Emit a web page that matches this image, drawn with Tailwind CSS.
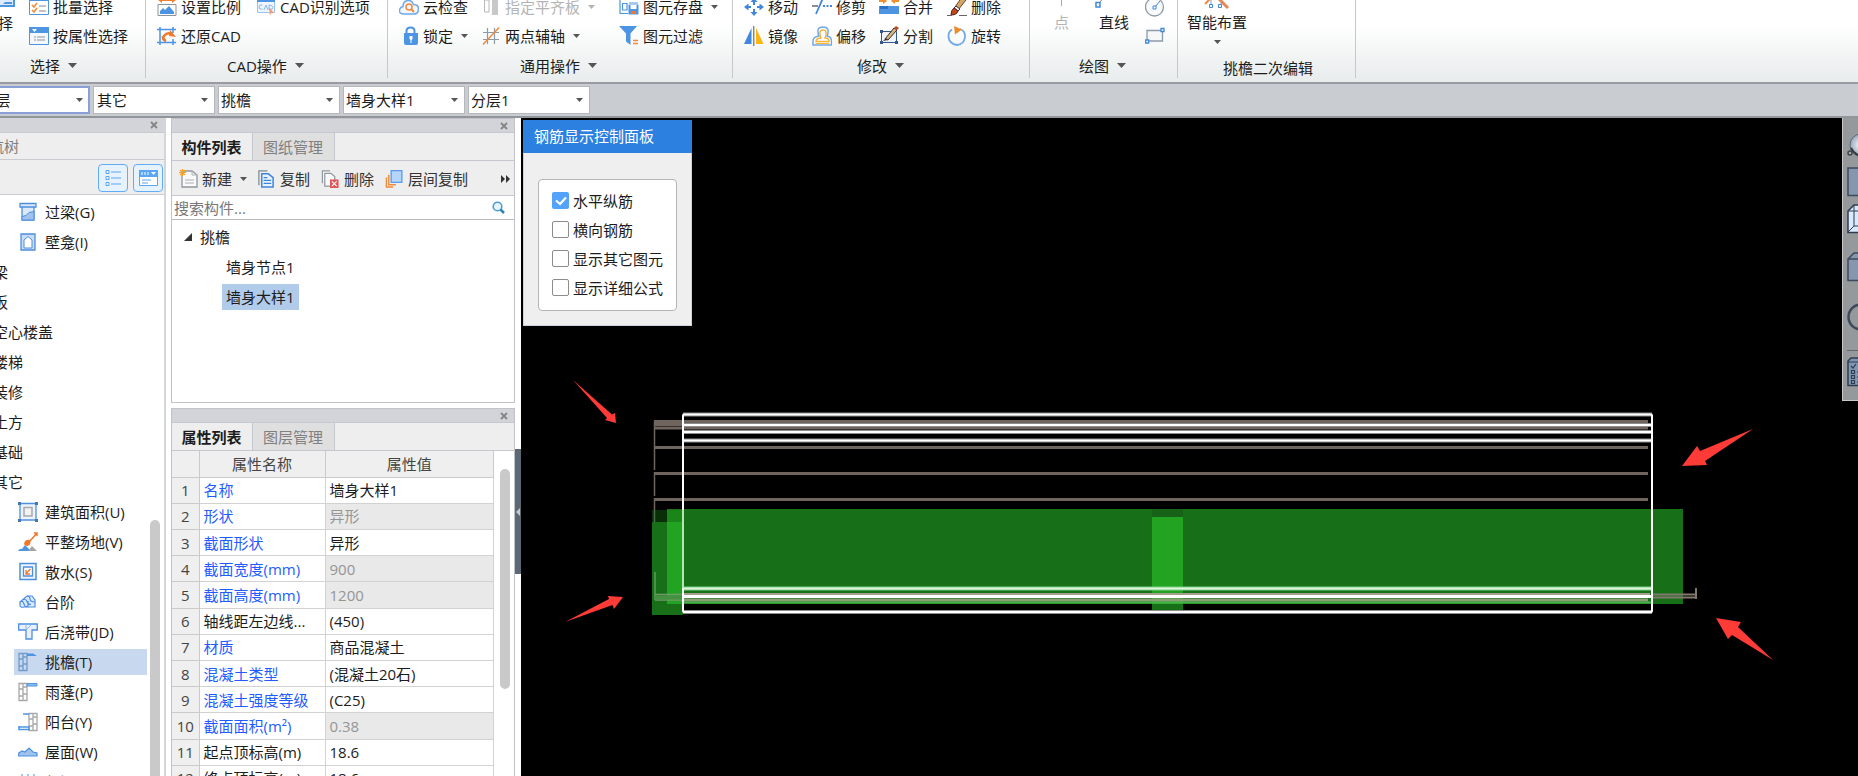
<!DOCTYPE html>
<html lang="zh-CN">
<head>
<meta charset="utf-8">
<title>构件编辑</title>
<script src="https://cdn.jsdelivr.net/npm/@tailwindcss/browser@4"></script>
</head>
<body class="flex h-screen flex-col overflow-hidden bg-white font-['Open_Sans','Noto_Sans_CJK_SC',sans-serif] text-[15px] leading-5 text-[#1c1c1c]">

<!-- Ribbon -->
<header class="flex h-[84px] shrink-0 overflow-hidden whitespace-nowrap border-b-2 border-[#989ba1] bg-linear-to-b from-white from-30% to-[#e8ecec]">
  <section class="w-[146px] shrink-0 border-r border-[#c6c9cb] h-[78px]">
    <div class="-mt-2 flex flex-col">
      <div class="flex">
        <button class="-ml-[17px] flex h-[58px] w-[46px] shrink-0 flex-col items-start pt-px">
          <svg class="ml-4 h-5 w-4" viewBox="0 0 16 20"><path d="M0 6H15V13H0z" fill="#dceafa" stroke="#4d94e2" stroke-width="2"/><path d="M6 9H13V11H4z" fill="#4d94e2"/></svg>
          <span>选择</span>
        </button>
        <div class="flex flex-col">
          <button class="flex h-[29px] items-center gap-1"><svg class="size-5" viewBox="0 0 20 20"><path d="M.5 1H19.500V17.500H.500z" fill="#fff" stroke="#4d94e2"/><path d="M0 0H20V4H0z" fill="#4d94e2"/><path d="M3 8l2 2 3-4M3 13l2 2 3-4" fill="none" stroke="#f08a3c" stroke-width="1.500"/><path d="M10 9h7M10 14h7" stroke="#888"/></svg>批量选择</button>
          <button class="flex h-[29px] items-center gap-1"><svg class="size-5" viewBox="0 0 20 20"><path d="M.5 1.500H19.500V18.500H.500z" fill="#f4f8fd" stroke="#4d94e2"/><path d="M0 1H20V7H0z" fill="#4d94e2"/><path d="M3 3h5l-2.500 3z" fill="#fff"/><path d="M5 11h2M5 14h2M8 11h8M8 14h8" stroke="#8d9299"/></svg>按属性选择</button>
        </div>
      </div>
      <button class="flex h-[31px] items-center gap-2 pl-[30px]">选择<svg class="h-[5px] w-[9px]" viewBox="0 0 9 5"><path d="M0 0H9L4.500 5z" fill="#555"/></svg></button>
    </div>
  </section>

  <section class="w-[242px] shrink-0 border-r border-[#c6c9cb] h-[78px]">
    <div class="-mt-2 flex flex-col">
      <div class="flex h-[29px] pl-[11px]">
        <button class="flex w-[99px] items-center gap-1"><svg class="size-5" viewBox="0 0 20 20"><path d="M1 3l4-3v2h10V0l4 3-4 3V4H5v2z" fill="#f08030"/><path d="M1 7.500H19V18.500H1z" fill="#fff" stroke="#8d9299"/><path d="M3 17v-3l3-3 2 2 4-4 5 6v2z" fill="#4d94e2"/></svg>设置比例</button>
        <button class="flex items-center gap-1"><svg class="size-5" viewBox="0 0 20 20"><path d="M1.500 1.500H18.500V15.500H1.500z" fill="#eef5fd" stroke="#9cc3ee"/><path d="M1 0H19V5H1z" fill="#4d94e2"/><path d="M6.500 8Q3 7 3 10t3.500 2M8 13l2-5 2 5M13 8v4.500q4 0 4-2t-4-2.500" fill="none" stroke="#8ab8ea"/><path d="M13 10l5 6-3 0-1 3z" fill="#f09a80"/></svg>CAD识别选项</button>
      </div>
      <button class="ml-[11px] flex h-[29px] items-center gap-1"><svg class="size-5" viewBox="0 0 20 20"><path d="M3 1V19M16 1V7M16 13V19M0 3.500H19M0 16.500H19" stroke="#4d94e2" stroke-width="1.500" fill="none"/><path d="M9 15q-5-2-2-5 3-4 8-2" fill="none" stroke="#f0782c" stroke-width="2.500"/><path d="M13 4l6 7-7-1zM4 10l4 2 1 5z" fill="#f0782c"/></svg>还原CAD</button>
      <button class="flex h-[31px] items-center gap-2 pl-[81px]">CAD操作<svg class="h-[5px] w-[9px]" viewBox="0 0 9 5"><path d="M0 0H9L4.500 5z" fill="#555"/></svg></button>
    </div>
  </section>

  <section class="w-[345px] shrink-0 border-r border-[#c6c9cb] h-[78px]">
    <div class="-mt-2 flex flex-col">
      <div class="grid grid-cols-[82px_138px_auto] justify-start pl-[11px]">
        <button class="flex h-[29px] items-center gap-1"><svg class="size-5" viewBox="0 0 20 20"><path d="M5 17q-5 0-4.500-4Q1 10 4 9.500 4 4 9 3.500q4-.5 5.500 4 5 0 5 4.500 0 5-5 5z" fill="#f3f8fe" stroke="#70a9ea" stroke-width="1.500"/><circle cx="10" cy="10" r="3" fill="none" stroke="#f08a3c" stroke-width="1.500"/><path d="M12 12l3 3" stroke="#f08a3c" stroke-width="2"/></svg>云检查</button>
        <button class="flex h-[29px] items-center gap-1 text-[#b4b4b4]" disabled><svg class="size-5" viewBox="0 0 20 20"><path d="M3.500 3H8V15H3.500z" fill="none" stroke="#b8b8b8"/><path d="M11 1H17V18H11z" fill="#c8c8c8"/></svg>指定平齐板<svg class="ml-1 h-1 w-[7px]" viewBox="0 0 7 4"><path d="M0 0H7L3.500 4z" fill="#b4b4b4"/></svg></button>
        <button class="flex h-[29px] items-center gap-1"><svg class="size-5" viewBox="0 0 20 20"><path d="M1 1.500H18M1 1V16.500H9M3.500 6.500H8V13H3.500zM10 6H19" fill="none" stroke="#4d94e2" stroke-width="1.200"/><path d="M9.500 7.500H19.500V17.500H9.500z" fill="#4d94e2"/><path d="M11.500 8H17.500V12H11.500z" fill="#fff"/><path d="M12 14H17V17H12z" fill="#f0782c"/></svg>图元存盘<svg class="ml-1 h-1 w-[7px]" viewBox="0 0 7 4"><path d="M0 0H7L3.500 4z" fill="#555"/></svg></button>
        <button class="flex h-[29px] items-center gap-1"><svg class="size-5" viewBox="0 0 20 20"><path d="M7.500 9V5q0-3.500 4-3.500t4 3.500v4" fill="none" stroke="#4d94e2" stroke-width="2"/><path d="M5 7H19V17q0 2-2 2H7q-2 0-2-2z" fill="#4d94e2"/><path d="M10.500 10h3v3l-1 1v3h-1v-3l-1-1z" fill="#fff"/></svg>锁定<svg class="ml-1 h-1 w-[7px]" viewBox="0 0 7 4"><path d="M0 0H7L3.500 4z" fill="#555"/></svg></button>
        <button class="flex h-[29px] items-center gap-1"><svg class="size-5" viewBox="0 0 20 20"><path d="M6.500 2V18M13.500 2V18M2 6.500H18M2 13.500H18" stroke="#8d9aa8" stroke-width="1.200"/><path d="M2 18.500L18 1.500" stroke="#f08a3c" stroke-width="1.500"/></svg>两点辅轴<svg class="ml-1 h-1 w-[7px]" viewBox="0 0 7 4"><path d="M0 0H7L3.500 4z" fill="#555"/></svg></button>
        <button class="flex h-[29px] items-center gap-1"><svg class="size-5" viewBox="0 0 20 20"><path d="M0 0H18L11.500 7.500V19L7 15.500V7.500z" fill="#4d94e2"/><path d="M14 14.500h5M14 17.500h5" stroke="#f08a3c" stroke-width="1.500"/></svg>图元过滤</button>
      </div>
      <button class="flex h-[31px] items-center gap-2 pl-[132px]">通用操作<svg class="h-[5px] w-[9px]" viewBox="0 0 9 5"><path d="M0 0H9L4.500 5z" fill="#555"/></svg></button>
    </div>
  </section>

  <section class="w-[297px] shrink-0 border-r border-[#c6c9cb] h-[78px]">
    <div class="-mt-2 flex flex-col">
      <div class="grid grid-cols-[68px_67px_68px_auto] justify-start pl-[11px]">
        <button class="flex h-[29px] items-center gap-1"><svg class="size-5" viewBox="0 0 20 20"><path d="M10 1l3.500 4h-7zM10 19l3.500-4h-7zM0 10l4.500-3.500v7zM20 10l-4.500-3.500v7z" fill="#3f87dc"/><path d="M10 4V8M10 12V16M3 10H7M13 10H17" stroke="#3f87dc" stroke-width="2"/></svg>移动</button>
        <button class="flex h-[29px] items-center gap-1"><svg class="size-5" viewBox="0 0 20 20"><path d="M0 9H6" stroke="#667" stroke-width="1.500"/><path d="M4 17L11 1" stroke="#3f87dc" stroke-width="1.800"/><path d="M11 9H20" stroke="#3f87dc" stroke-width="1.800" stroke-dasharray="2 1.500"/></svg>修剪</button>
        <button class="flex h-[29px] items-center gap-1"><svg class="size-5" viewBox="0 0 20 20"><path d="M0 2H4V0l4 4-4 3V5H0zM20 2H16V0l-4 4 4 3V5H20z" fill="#f09030"/><path d="M0 9H20V17H0z" fill="#4d94e2"/><path d="M1 9H9V12H1z" fill="#2d71c5"/></svg>合并</button>
        <button class="flex h-[29px] items-center gap-1"><svg class="size-5" viewBox="0 0 20 20"><path d="M8 10L15 0l4 3-8 10z" fill="#d7a466" stroke="#6a4a34"/><path d="M9 9l4 3-2 2-4-3z" fill="#eee" stroke="#333"/><path d="M7 11l4 3q-1 4-7 4 0-5 3-7z" fill="#c2451d" stroke="#5c2414"/><path d="M0 18.500h5M12 18.500h8" stroke="#666"/></svg>删除</button>
        <button class="flex h-[29px] items-center gap-1"><svg class="size-5" viewBox="0 0 20 20"><path d="M7.500 2V18H0z" fill="#3f87dc"/><path d="M12 2V18H19.500z" fill="#fbb616"/><path d="M9.800 0V20" stroke="#555"/></svg>镜像</button>
        <button class="flex h-[29px] items-center gap-1"><svg class="size-5" viewBox="0 0 20 20"><path d="M7 10Q3.500 1 11 1T15 10q4.500 1 4.500 5v4H1v-4q0-4 6-5z" fill="#fff" stroke="#70a9ea" stroke-width="1.500"/><path d="M9 12Q6 4 11 4T13 12q4 0 4 3.500H4Q4 12 9 12z" fill="#fff" stroke="#f5b53c" stroke-width="1.500"/><path d="M3.500 17.500H17" stroke="#f5b53c" stroke-width="1.200"/></svg>偏移</button>
        <button class="flex h-[29px] items-center gap-1"><svg class="size-5" viewBox="0 0 20 20"><path d="M2.500 5.500H17.500V16.500H2.500z" fill="#eef3fa" stroke="#34588e"/><path d="M1 4h3v3H1zM16 15h3v3h-3zM1 15h3v3H1z" fill="#34588e"/><path d="M6 13L15 2l3 2L9 14z" fill="#d7b27a" stroke="#333"/><path d="M15 2l2-2 3 2-2 2z" fill="#c04528"/><path d="M4 15L7 12l2 2z" fill="#333"/></svg>分割</button>
        <button class="flex h-[29px] items-center gap-1"><svg class="size-5" viewBox="0 0 20 20"><path d="M5 3.500Q1 6 1.500 11q1 7 8.500 8 7-.5 8-8 .5-6-5-8" fill="none" stroke="#70a9ea" stroke-width="1.800"/><path d="M7 0l8 3.500-7 5z" fill="#f08a28"/></svg>旋转</button>
      </div>
      <button class="flex h-[31px] items-center gap-2 pl-[124px]">修改<svg class="h-[5px] w-[9px]" viewBox="0 0 9 5"><path d="M0 0H9L4.500 5z" fill="#555"/></svg></button>
    </div>
  </section>

  <section class="w-[148px] shrink-0 border-r border-[#c6c9cb] h-[78px]">
    <div class="-mt-2 flex flex-col">
      <div class="flex h-[58px] pl-6">
        <button class="flex w-[45px] flex-col items-start text-[#b4b4b4]" disabled><svg class="h-5 w-4" viewBox="0 0 16 20"><path d="M7.500 0V14" stroke="#aaa"/></svg>点</button>
        <button class="flex w-[46px] flex-col items-start"><svg class="-ml-1 h-5 w-5" viewBox="0 0 20 20"><path d="M1 10.500H5V15H1z" fill="#fff" stroke="#3f87dc" stroke-width="1.500"/><path d="M5 10L10 4" stroke="#888"/></svg>直线</button>
        <div class="flex flex-col">
          <button class="flex h-[29px] items-center" aria-label="圆"><svg class="size-5" viewBox="0 0 20 20"><circle cx="9.500" cy="10" r="9" fill="#f8fafb" stroke="#8d9aa8" stroke-width="1.300"/><path d="M10 10L15 4" stroke="#3f87dc"/><path d="M8 9h3v3H8z" fill="#fff" stroke="#3f87dc"/></svg></button>
          <button class="flex h-[29px] items-center" aria-label="矩形"><svg class="size-5" viewBox="0 0 20 20"><path d="M2 4.500H17.500V15H2z" fill="#f5f7f8" stroke="#8d9aa8" stroke-width="1.300"/><path d="M16 2.500h3v3h-3zM.7 14h3v3h-3z" fill="#fff" stroke="#3f87dc" stroke-width="1.300"/></svg></button>
        </div>
      </div>
      <button class="flex h-[31px] items-center gap-2 pl-[49px]">绘图<svg class="h-[5px] w-[9px]" viewBox="0 0 9 5"><path d="M0 0H9L4.500 5z" fill="#555"/></svg></button>
    </div>
  </section>

  <section class="w-[178px] shrink-0 border-r border-[#c6c9cb] h-[78px]">
    <div class="-mt-2 flex flex-col">
      <button class="ml-[9px] flex h-[58px] w-[60px] flex-col items-center"><svg class="h-5 w-8" viewBox="0 0 32 20"><path d="M10 13V8M20 13V9" stroke="#70a9ea"/><path d="M4 12L9 7" stroke="#f08a3c" stroke-width="2"/><path d="M8.500 12.500h3v3h-3zM17.500 12.500h3v3h-3z" fill="#fff" stroke="#3f87dc"/><path d="M14 5L18 7 27 16" fill="none" stroke="#e58a55" stroke-width="3"/></svg>智能布置<svg class="mt-2 h-1 w-[7px] shrink-0" viewBox="0 0 7 4"><path d="M0 0H7L3.500 4z" fill="#555"/></svg></button>
      <h2 class="flex h-[31px] items-center pl-[45px] pt-1">挑檐二次编辑</h2>
    </div>
  </section>
</header>

<!-- Element selectors -->
<nav class="flex h-[34px] shrink-0 items-center gap-[3px] overflow-hidden border-b-2 border-[#92969a] bg-[#c9ccd1]" aria-label="构件选择">
  <div class="relative -ml-8 shrink-0"><select aria-label="楼层" class="h-7 w-[122px] appearance-none border-2 border-[#8a9fd8] bg-white pl-0.5"><option>第3层</option></select><svg class="pointer-events-none absolute right-[7px] top-3 h-1 w-[7px]" viewBox="0 0 7 4"><path d="M0 0H7L3.500 4z" fill="#555"/></svg></div>
  <div class="relative shrink-0"><select aria-label="类别" class="h-7 w-[122px] appearance-none border border-[#b4b7bb] bg-white pl-[3px]"><option>其它</option></select><svg class="pointer-events-none absolute right-[7px] top-3 h-1 w-[7px]" viewBox="0 0 7 4"><path d="M0 0H7L3.500 4z" fill="#555"/></svg></div>
  <div class="relative shrink-0"><select aria-label="构件类型" class="h-7 w-[122px] appearance-none border border-[#b4b7bb] bg-white pl-0.5"><option>挑檐</option></select><svg class="pointer-events-none absolute right-[7px] top-3 h-1 w-[7px]" viewBox="0 0 7 4"><path d="M0 0H7L3.500 4z" fill="#555"/></svg></div>
  <div class="relative shrink-0"><select aria-label="构件" class="h-7 w-[122px] appearance-none border border-[#b4b7bb] bg-white pl-0.5"><option>墙身大样1</option></select><svg class="pointer-events-none absolute right-[7px] top-3 h-1 w-[7px]" viewBox="0 0 7 4"><path d="M0 0H7L3.500 4z" fill="#555"/></svg></div>
  <div class="relative shrink-0"><select aria-label="分层" class="h-7 w-[122px] appearance-none border border-[#b4b7bb] bg-white pl-0.5"><option>分层1</option></select><svg class="pointer-events-none absolute right-[7px] top-3 h-1 w-[7px]" viewBox="0 0 7 4"><path d="M0 0H7L3.500 4z" fill="#555"/></svg></div>
</nav>

<main class="flex min-h-0 flex-1 whitespace-nowrap">

  <!-- Navigation tree -->
  <aside class="flex w-[166px] shrink-0 flex-col overflow-hidden border-r-2 border-[#d4d6dc]">
    <div class="flex h-[14px] shrink-0 items-center justify-end bg-[#d3d4da] pr-1.5"><button aria-label="关闭导航树"><svg class="size-2" viewBox="0 0 8 8"><path d="M1 1L7 7M7 1L1 7" stroke="#858585" stroke-width="1.800"/></svg></button></div>
    <h2 class="flex h-7 shrink-0 items-center border-y border-[#c9cbd0] bg-[#eee] text-[#808080]"><span class="-ml-[26px]">导航树</span></h2>
    <div class="flex h-[35px] shrink-0 items-center justify-end gap-[5px] border-b border-[#c9cbd0] bg-[#eee] pr-px pt-px">
      <button class="flex h-7 w-[30px] items-center justify-center rounded border border-[#62abf7] bg-[#e6f2fe]" aria-label="列表视图"><svg class="h-[18px] w-4" viewBox="0 0 16 18"><path d="M1 1.500H4V4.500H1zM1 7.500H4V10.500H1zM1 13.500H4V16.500H1z" fill="none" stroke="#5aa6f5"/><path d="M6 3H16M6 9H16M6 15H16" stroke="#5aa6f5"/></svg></button>
      <button class="flex h-7 w-[30px] items-center justify-center rounded border border-[#62abf7] bg-[#e6f2fe]" aria-label="图标视图"><svg class="h-4 w-[19px]" viewBox="0 0 19 16"><path d="M.5 .5H18.500V15.500H.500z" fill="#fff" stroke="#5aa6f5"/><path d="M0 0H19V7H0z" fill="#5aa6f5"/><path d="M3 2V5M6 2V5M9 2V5" stroke="#fff"/><path d="M12 2h5l-2.500 3z" fill="#fff"/><path d="M3 10H12M3 13H9" stroke="#5aa6f5"/></svg></button>
    </div>
    <div class="flex min-h-0 flex-1">
      <ul class="min-w-0 flex-1 overflow-hidden pt-0.5">
        <li class="flex h-[30px] items-center gap-[7px] pl-[18px]"><svg class="size-5" viewBox="0 0 20 20"><path d="M2 1.500H18V5H2zM4 5V18H16V5" fill="#dbe9fa" stroke="#4d8fdf" stroke-width="1.300"/><path d="M4 14.500l4-1 3-3 5-1V18H4z" fill="#9fc2ee" stroke="#4d8fdf"/></svg>过梁(G)</li>
        <li class="flex h-[30px] items-center gap-[7px] pl-[18px]"><svg class="size-5" viewBox="0 0 20 20"><path d="M3 2H17V18H3z" fill="#c8dcf5" stroke="#4d8fdf" stroke-width="1.300"/><path d="M6 16V8l4-3.500L14 8v8z" fill="#fff" stroke="#4d8fdf"/></svg>壁龛(I)</li>
        <li class="-ml-[7px] flex h-[30px] items-center">梁</li>
        <li class="-ml-[7px] flex h-[30px] items-center">板</li>
        <li class="-ml-[7px] flex h-[30px] items-center">空心楼盖</li>
        <li class="-ml-[7px] flex h-[30px] items-center">楼梯</li>
        <li class="-ml-[7px] flex h-[30px] items-center">装修</li>
        <li class="-ml-[7px] flex h-[30px] items-center">土方</li>
        <li class="-ml-[7px] flex h-[30px] items-center">基础</li>
        <li class="-ml-[7px] flex h-[30px] items-center">其它</li>
        <li class="flex h-[30px] items-center gap-[7px] pl-[18px]"><svg class="size-5" viewBox="0 0 20 20"><path d="M2 1.500H18V18H2z" fill="#eef4fc" stroke="#4d8fdf" stroke-width="1.300"/><path d="M0 0H3V3H0zM17 0H20V3H17zM0 17H3V20H0zM17 17H20V20H17z" fill="#4377b8"/><path d="M6 5.500H14V14H6z" fill="#f2f2f2" stroke="#a8a8a8" stroke-width="1.500"/></svg>建筑面积(U)</li>
        <li class="flex h-[30px] items-center gap-[7px] pl-[18px]"><svg class="size-5" viewBox="0 0 20 20"><path d="M0 19q2-3 4-2l3-4 5 5v1z" fill="#4d94e2"/><path d="M10 19l4-5 5 5z" fill="#a5a5a5"/><path d="M19 1L12 9M16 1h3v3" fill="none" stroke="#f0782c" stroke-width="1.500"/><path d="M6 12q1-5 6-4 2 5-3 6-2 0-3-2z" fill="#f0782c"/></svg>平整场地(V)</li>
        <li class="flex h-[30px] items-center gap-[7px] pl-[18px]"><svg class="size-5" viewBox="0 0 20 20"><path d="M2 1.500H18V17.500H2z" fill="#eef4fc" stroke="#4d8fdf" stroke-width="1.500"/><path d="M5.500 5H14.500V14H5.500z" fill="#fff" stroke="#4d8fdf" stroke-width="1.300"/><path d="M12.500 7L8 11.500M8 8V12H12" fill="none" stroke="#f0782c" stroke-width="1.300"/></svg>散水(S)</li>
        <li class="flex h-[30px] items-center gap-[7px] pl-[18px]"><svg class="size-5" viewBox="0 0 20 20"><path d="M2 10l7-6h5l3 4v7H6q-4 1-4-2z" fill="#dbe9fa" stroke="#4d8fdf" stroke-width="1.200"/><path d="M2 10q3-2 4 2t4 2M5 7.500q3-1 4 2t4 3M9 4q3 0 3 3t5 3M10 15V9" fill="none" stroke="#4d8fdf" stroke-width="1.200"/></svg>台阶</li>
        <li class="flex h-[30px] items-center gap-[7px] pl-[18px]"><svg class="size-5" viewBox="0 0 20 20"><path d="M.7 2H19.300V8H14V17H8V8H.7z" fill="#e8f1fc" stroke="#4d8fdf" stroke-width="1.300"/><path d="M8 8V2M8 8l5-5" stroke="#8ab4ea"/></svg>后浇带(JD)</li>
        <li class="flex h-[30px] items-center pl-[14px]"><span class="flex h-[26px] w-[133px] items-center gap-[7px] bg-[#c8d8ef] pl-1"><svg class="size-5" viewBox="0 0 20 20"><path d="M1 1.500H9V18.500H1zM1 7H5M5 1V18M5 12H9M1 14H5M5 5H9" fill="none" stroke="#6f9cc8" stroke-width="1.300"/><path d="M9 1.500H15L19 4H9z" fill="#4d94e2"/></svg>挑檐(T)</span></li>
        <li class="flex h-[30px] items-center gap-[7px] pl-[18px]"><svg class="size-5" viewBox="0 0 20 20"><path d="M1 1.500H9V18.500H1zM1 7H5M5 1V18M5 12H9M1 14H5M5 5H9" fill="none" stroke="#a8a8a8" stroke-width="1.300"/><path d="M9 1.500H19V4H9z" fill="#8fbcf0" stroke="#4d94e2"/></svg>雨蓬(P)</li>
        <li class="flex h-[30px] items-center gap-[7px] pl-[18px]"><svg class="size-5" viewBox="0 0 20 20"><path d="M11 1.500H19V18.500H11zM11 7H15M15 1V18M15 12H19M11 14H15M15 5H19" fill="none" stroke="#a8a8a8" stroke-width="1.300"/><path d="M5 2H11M1 14V17.500H11V15H1" fill="none" stroke="#4d94e2" stroke-width="1.500"/></svg>阳台(Y)</li>
        <li class="flex h-[30px] items-center gap-[7px] pl-[18px]"><svg class="size-5" viewBox="0 0 20 20"><path d="M.7 14V11L4 9l3 1 4-4 4 4 4 1v3z" fill="#9fc2ee" stroke="#4d8fdf" stroke-width="1.200"/></svg>屋面(W)</li>
        <li class="flex h-[30px] items-center gap-[7px] pl-[18px]"><svg class="size-5" viewBox="0 0 20 20"><path d="M4 2V20M10 2V20M16 2V20" stroke="#70a9ea" stroke-width="1.300"/></svg>保温层(H)</li>
      </ul>
      <div class="flex w-[14px] shrink-0 flex-col pt-[325px]"><div class="w-[10px] flex-1 rounded-t-full bg-[#c9c9c9]"></div></div>
    </div>
  </aside>

  <div class="flex w-[349px] shrink-0 flex-col pl-[5px]">

    <!-- Component list -->
    <section class="flex h-[285px] shrink-0 flex-col border border-[#c2c3c8] bg-white">
      <div class="flex h-[13px] shrink-0 items-center justify-end bg-[#d3d4da] pr-1.5"><button aria-label="关闭构件列表"><svg class="size-2" viewBox="0 0 8 8"><path d="M1 1L7 7M7 1L1 7" stroke="#858585" stroke-width="1.800"/></svg></button></div>
      <div class="flex h-[29px] shrink-0 border-y border-[#c5c8ce] bg-[#eee]" role="tablist">
        <button role="tab" aria-selected="true" class="w-[81px] border-r border-[#c5c8ce] pr-px font-bold">构件列表</button>
        <button role="tab" aria-selected="false" class="w-[82px] border-r border-[#c5c8ce] bg-[#dfdfdf] pr-px text-[#808080]">图纸管理</button>
      </div>
      <div class="flex h-[35px] shrink-0 items-center border-b border-[#c5c8ce] bg-[#eee] pl-[7px] pr-1 pt-px text-[#333]">
        <button class="flex items-center gap-1"><svg class="size-[19px]" viewBox="0 0 19 19"><path d="M4 2H13L18 6V18H3V6" fill="#fafafa" stroke="#8f979f" stroke-width="1.300"/><path d="M13 2V6H18M6 11H15M6 14H15" fill="none" stroke="#a9afb5"/><path d="M0 3.500H7M3.500 0V7M1 1L6 6M6 1L1 6" stroke="#f5a028" stroke-width="1.200"/></svg>新建<svg class="ml-1 h-1 w-[7px]" viewBox="0 0 7 4"><path d="M0 0H7L3.500 4z" fill="#555"/></svg></button>
        <button class="ml-[10px] flex items-center gap-[5px]"><svg class="size-[18px]" viewBox="0 0 17 19"><path d="M1 16V1H10" fill="none" stroke="#7c8994" stroke-width="1.300"/><path d="M4 4H11L16 8V18H4z" fill="#eaf3fd" stroke="#3f87dc" stroke-width="1.600"/><path d="M6 8H10M6 11H14M6 14H14" stroke="#3f87dc" stroke-width="1.300"/></svg>复制</button>
        <button class="ml-[11px] flex items-center gap-[5px]"><svg class="size-[18px]" viewBox="0 0 18 19"><path d="M1 14V1H9M3.500 17V3.500H10L14 7V17z" fill="#fafafa" stroke="#8f979f" stroke-width="1.300"/><path d="M9 10H18V19H9z" fill="#e05555"/><path d="M11 12L16 17M16 12L11 17" stroke="#fff" stroke-width="1.200"/></svg>删除</button>
        <button class="ml-[11px] flex items-center gap-[5px]"><svg class="size-[18px]" viewBox="0 0 18 19"><path d="M3.500 5V15.500H11M1 8V18H8" fill="none" stroke="#f08a3c" stroke-width="1.500"/><path d="M6 .7H17.300V13H6z" fill="#b5d5fb" stroke="#5a9ceb" stroke-width="1.400"/></svg>层间复制</button>
        <button class="ml-auto" aria-label="更多"><svg class="h-2 w-[9px]" viewBox="0 0 9 8"><path d="M0 0L4 4 0 8zM5 0L9 4 5 8z" fill="#333"/></svg></button>
      </div>
      <label class="flex h-6 shrink-0 items-center border-b border-[#b9bbbf] pl-0.5 pr-[9px]"><input type="search" placeholder="搜索构件..." aria-label="搜索构件" class="min-w-0 flex-1 outline-none placeholder:text-[#777]"><svg class="size-[13px]" viewBox="0 0 13 13"><circle cx="5.500" cy="5.500" r="4.300" fill="#e8f4fc" stroke="#4a9fd0" stroke-width="1.600"/><path d="M8.500 8.500L12 12" stroke="#2d83b8" stroke-width="2.500"/></svg></label>
      <ul class="flex flex-col pt-0.5">
        <li class="flex h-[30px] items-center gap-2 pl-3"><svg class="size-2" viewBox="0 0 8 8"><path d="M8 0V8H0z" fill="#333"/></svg>挑檐</li>
        <li class="flex h-[30px] items-center pl-[50px]"><span class="px-1">墙身节点1</span></li>
        <li class="flex h-[30px] items-center pl-[50px]"><span class="bg-[#b1cbeb] px-1 py-[3px]">墙身大样1</span></li>
      </ul>
    </section>

    <!-- Property list -->
    <section class="mt-[5px] flex min-h-0 flex-1 flex-col overflow-hidden border border-b-0 border-[#c2c3c8] bg-white">
      <div class="flex h-[13px] shrink-0 items-center justify-end bg-[#d3d4da] pr-1.5"><button aria-label="关闭属性列表"><svg class="size-2" viewBox="0 0 8 8"><path d="M1 1L7 7M7 1L1 7" stroke="#858585" stroke-width="1.800"/></svg></button></div>
      <div class="flex h-[29px] shrink-0 border-y border-[#c5c8ce] bg-[#eee]" role="tablist">
        <button role="tab" aria-selected="true" class="w-[81px] border-r border-[#c5c8ce] pr-px font-bold">属性列表</button>
        <button role="tab" aria-selected="false" class="w-[82px] border-r border-[#c5c8ce] bg-[#dfdfdf] pr-px text-[#808080]">图层管理</button>
      </div>
      <div class="flex min-h-0 flex-1 items-start">
        <table class="h-[341px] w-[322px] shrink-0 table-fixed border-collapse text-left [&_td]:border [&_td]:border-[#d2d2d2] [&_td]:px-1 [&_td]:py-0 [&_th]:border [&_th]:border-t-0 [&_th]:border-[#cacaca] [&_th]:bg-[#efefef] [&_th]:p-0 [&_th]:text-center [&_th]:font-normal [&_th]:text-[#444] [&_tr>*:first-child]:border-l-0">
          <thead><tr class="h-[26px]"><th class="w-[27px]"></th><th class="w-[126px]">属性名称</th><th>属性值</th></tr></thead>
          <tbody>
            <tr><th>1</th><td class="text-[#1f5cff]">名称</td><td>墙身大样1</td></tr>
            <tr><th>2</th><td class="text-[#1f5cff]">形状</td><td class="bg-[#e9e9e9] text-[#959595]">异形</td></tr>
            <tr><th>3</th><td class="text-[#1f5cff]">截面形状</td><td>异形</td></tr>
            <tr><th>4</th><td class="text-[#1f5cff]">截面宽度(mm)</td><td class="bg-[#e9e9e9] text-[#959595]">900</td></tr>
            <tr><th>5</th><td class="text-[#1f5cff]">截面高度(mm)</td><td class="bg-[#e9e9e9] text-[#959595]">1200</td></tr>
            <tr><th>6</th><td>轴线距左边线...</td><td>(450)</td></tr>
            <tr><th>7</th><td class="text-[#1f5cff]">材质</td><td>商品混凝土</td></tr>
            <tr><th>8</th><td class="text-[#1f5cff]">混凝土类型</td><td>(混凝土20石)</td></tr>
            <tr><th>9</th><td class="text-[#1f5cff]">混凝土强度等级</td><td>(C25)</td></tr>
            <tr><th>10</th><td class="text-[#1f5cff]">截面面积(m²)</td><td class="bg-[#e9e9e9] text-[#959595]">0.38</td></tr>
            <tr><th>11</th><td>起点顶标高(m)</td><td>18.6</td></tr>
            <tr><th>12</th><td>终点顶标高(m)</td><td>18.6</td></tr>
          </tbody>
        </table>
        <div class="ml-1.5 mt-[18px] h-[220px] w-[10px] rounded-full bg-[#c9c9c9]"></div>
      </div>
    </section>
  </div>

  <!-- Splitter with its collapse handle -->
  <div class="w-1.5 shrink-0 pt-[331px]"><button class="flex h-[125px] w-full items-center bg-[#5c6873]" aria-label="收起面板"><svg class="ml-px h-2 w-1" viewBox="0 0 4 8"><path d="M4 0V8L0 4z" fill="#c6cbd0"/></svg></button></div>

  <!-- Model view -->
  <div class="relative min-w-0 flex-1 overflow-hidden bg-black">
    <svg class="absolute inset-0 size-full" viewBox="521 118 1337 658" preserveAspectRatio="xMinYMin meet" role="img" aria-label="挑檐钢筋三维视图">
      <g fill="#177017">
        <path d="M667 509H1683V604H667zM652 522H683V615H652zM1152 604H1183V612H1152z"/>
        <path d="M652 510H667V522H652z" fill="#082f08"/>
        <path d="M667 510H683V522H667z" fill="#1a861a"/>
        <path d="M667 522H683V604H667zM1152 517H1183V604H1152z" fill="#22a422"/>
        <path d="M1152 509H1183V517H1152z" fill="#186218"/>
      </g>
      <g fill="none" stroke="#70645f" stroke-width="3">
        <path d="M654 421.500H1648M654 424.500H1648M654 428H1648M683 431.500H1648M654 447.500H1648M654 473.500H1648M654 499.500H1648"/>
        <path d="M654.500 421V470M654.500 472V496M654.500 498V510" stroke-width="1.500"/>
        <path d="M654.500 510V522" stroke="#4d6a4a" stroke-width="1.500"/>
        <path d="M655 572V600" stroke="#5f9a5c" stroke-width="1.500"/>
        <path d="M655 594.500H683M655 600H683" stroke="#6f9b68" stroke-width="1.500"/>
        <path d="M655 597.500H683" stroke="#469043" stroke-width="4"/>
        <path d="M1652 594.500H1696M1652 597.500H1696M1696 588V599" stroke="#83786e" stroke-width="2"/>
      </g>
      <path d="M683 588.500H1652" stroke="#7ed284" stroke-width="4"/>
      <path d="M683 594H1650" stroke="#a4a08c" stroke-width="2"/>
      <path d="M683 600H1648" stroke="#8d9d78" stroke-width="3"/>
      <path d="M683 602.500H1652" stroke="#48b34a" stroke-width="2"/>
      <g fill="none" stroke="#8d8d8d" stroke-width="4">
        <path d="M683 414.500H1652M683 425H1652M683 432H1652M683 440.500H1652M683 612H1652"/>
      </g>
      <g fill="none" stroke="#fff" stroke-width="2">
        <rect x="683" y="414.500" width="969" height="197.500" rx="1"/>
        <path d="M683 425H1652M683 432H1652M683 440.500H1652"/>
        <path d="M683 588.500H1652" stroke="#dff5df"/>
        <path d="M683 596.500H1652" stroke-width="3"/>
        <path d="M683 510V588" stroke="#b4e6b4"/>
      </g>
      <g fill="#ff3b37">
        <path d="M573 380L612 414.500 615 413 616 423 605 420 607 418z"/>
        <path d="M565 622L609 599 608 596 623 597 614 609 612.500 605z"/>
        <path d="M1753 429L1705 461 1707 465 1682 466 1697 446 1700 451z"/>
        <path d="M1773 660L1732 635 1728 639 1716 618 1741 622 1738 627z"/>
      </g>
    </svg>

    <!-- Rebar display dialog -->
    <section class="absolute left-0.5 top-0.5 w-[169px] border border-t-0 border-[#c9d3df] bg-[#efefef]" role="dialog" aria-labelledby="rebar-title">
      <h2 id="rebar-title" class="-mx-px h-[33px] bg-[#2c80e0] pl-[11px] leading-8 text-white">钢筋显示控制面板</h2>
      <div class="mx-[14px] mb-[14px] mt-[26px] flex flex-col rounded border border-[#b5b5b5] bg-white px-[13px] pb-2 pt-[6px]">
        <label class="flex h-[29px] items-center gap-1"><span class="grid place-items-center"><input type="checkbox" checked class="col-start-1 row-start-1 size-[17px] appearance-none rounded-xs bg-[#54a3fb]"><svg class="pointer-events-none col-start-1 row-start-1 size-3" viewBox="0 0 12 12"><path d="M1 5.500L5 9 11 2.500" fill="none" stroke="#fff" stroke-width="2.200"/></svg></span>水平纵筋</label>
        <label class="flex h-[29px] items-center gap-1"><input type="checkbox" class="size-[17px] appearance-none rounded-xs border border-[#8c8c8c] bg-white">横向钢筋</label>
        <label class="flex h-[29px] items-center gap-1"><input type="checkbox" class="size-[17px] appearance-none rounded-xs border border-[#8c8c8c] bg-white">显示其它图元</label>
        <label class="flex h-[29px] items-center gap-1"><input type="checkbox" class="size-[17px] appearance-none rounded-xs border border-[#8c8c8c] bg-white">显示详细公式</label>
      </div>
    </section>

    <!-- View toolbar, running off the right edge -->
    <div class="absolute right-0 top-0 flex h-[283px] w-4 flex-col overflow-hidden border-b border-l border-[#c8c8c8] bg-[#96999b] pl-1" role="toolbar" aria-label="视图">
      <button class="mt-[13px] h-[30px]" aria-label="动态观察"><svg class="h-[30px] w-6" viewBox="0 0 24 30"><defs><radialGradient id="ball"><stop offset="0" stop-color="#fff"/><stop offset="1" stop-color="#98a8ba"/></radialGradient></defs><circle cx="14" cy="14" r="11" fill="url(#ball)" stroke="#5b6878"/><path d="M4 17q3 6 9 8" stroke="#333d48" stroke-width="2" fill="none"/><circle cx="3" cy="22" r="2" fill="#aaa" stroke="#444" stroke-width="1.500"/></svg></button>
      <button class="mt-[6px] h-[30px]" aria-label="俯视"><svg class="h-[30px] w-7" viewBox="0 0 28 30"><path d="M1 1H27V28.500H1z" fill="#8497ad" stroke="#3c4a5c" stroke-width="1.500"/></svg></button>
      <button class="mt-[7px] h-[30px]" aria-label="线框"><svg class="h-[30px] w-7" viewBox="0 0 28 30"><path d="M1 7L7 1H27V28.500H1z" fill="#d8eafd" stroke="#2f3c4c" stroke-width="1.500"/><path d="M1 7H27M7 1V22H27M1 28L7 22" fill="none" stroke="#2f3c4c"/></svg></button>
      <button class="mt-[18px] h-[30px]" aria-label="实体"><svg class="h-[30px] w-7" viewBox="0 0 28 30"><path d="M1 7L7 1H27V28.500H1z" fill="#8497ad" stroke="#3c4a5c" stroke-width="1.500"/><path d="M1 7H27" stroke="#3c4a5c" stroke-width="1.500"/></svg></button>
      <button class="mt-5 h-[30px]" aria-label="旋转"><svg class="h-[30px] w-7" viewBox="0 0 28 30"><circle cx="14" cy="15" r="12.500" fill="none" stroke="#3c4a5c" stroke-width="2.500"/></svg></button>
      <hr class="mt-[18px] w-8 border-[#666]">
      <button class="mt-[6px] h-[30px]" aria-label="显示设置"><svg class="h-[30px] w-7" viewBox="0 0 28 30"><path d="M1 4L4 1H27V28.500H1z" fill="#7e96b2" stroke="#2f3c4c" stroke-width="1.500"/><path d="M1 5H27" stroke="#2f3c4c"/><path d="M4 9l2 2 3-4M4.500 13.500h3v3h-3zM4.500 18.500h3v3h-3zM4.500 23.500h3v3h-3zM10 15h12M10 20h12M10 25h12" fill="none" stroke="#2f3c4c" stroke-width="1.200"/></svg></button>
    </div>
  </div>
</main>
</body>
</html>
